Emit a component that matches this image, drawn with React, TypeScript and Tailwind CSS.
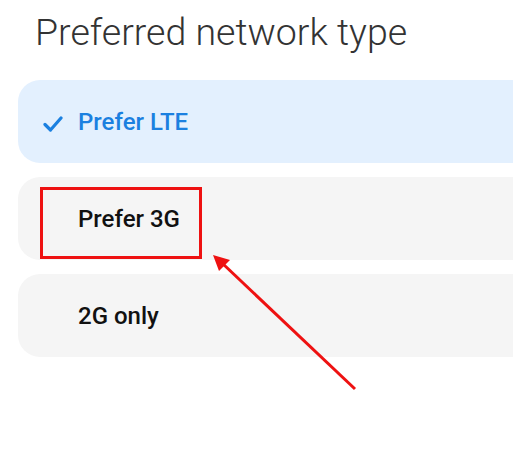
import React from 'react';

const options = [
  { label: 'Prefer LTE', selected: true },
  { label: 'Prefer 3G', selected: false },
  { label: '2G only', selected: false },
];

export default function App() {
  return (
    <div
      className="relative w-[513px] h-[468px] overflow-hidden bg-white"
      style={{ fontFamily: 'Roboto, "Noto Sans", sans-serif' }}
    >
      <h1 className="pl-[35px] pt-[10px] text-[37.5px] leading-[44px] font-light text-[#333333]">
        Preferred network type
      </h1>

      <div className="mt-[26px] pl-[18px] flex flex-col gap-[14px]">
        {options.map((opt) => (
          <div
            key={opt.label}
            className={`h-[83px] w-[520px] rounded-[22px] flex items-center pl-[60px] ${
              opt.selected ? 'bg-[#e3f0fe]' : 'bg-[#f5f5f5]'
            }`}
          >
            <div className="relative flex items-center">
              {opt.selected && (
                <svg
                  className="absolute left-[-35px] top-[7px]"
                  width="20"
                  height="18"
                  viewBox="0 0 20 18"
                >
                  <path
                    d="M2 9.5 L7.5 15 L18 3"
                    fill="none"
                    stroke="#1b80e0"
                    strokeWidth="3.2"
                    strokeLinecap="round"
                    strokeLinejoin="round"
                  />
                </svg>
              )}
              <span
                className={`text-[24px] leading-[28px] font-medium ${
                  opt.selected ? 'text-[#1b80e0]' : 'text-[#111111]'
                }`}
              >
                {opt.label}
              </span>
            </div>
          </div>
        ))}
      </div>

      {/* annotation */}
      <div className="absolute left-[40px] top-[187px] w-[162px] h-[72px] border-[3px] border-[#ee1111]" />
      <svg className="absolute left-0 top-0" width="513" height="468">
        <line x1="355" y1="389" x2="222" y2="263" stroke="#ee1111" strokeWidth="3" />
        <polygon points="213,255 230,260 219,271" fill="#ee1111" />
      </svg>
    </div>
  );
}
